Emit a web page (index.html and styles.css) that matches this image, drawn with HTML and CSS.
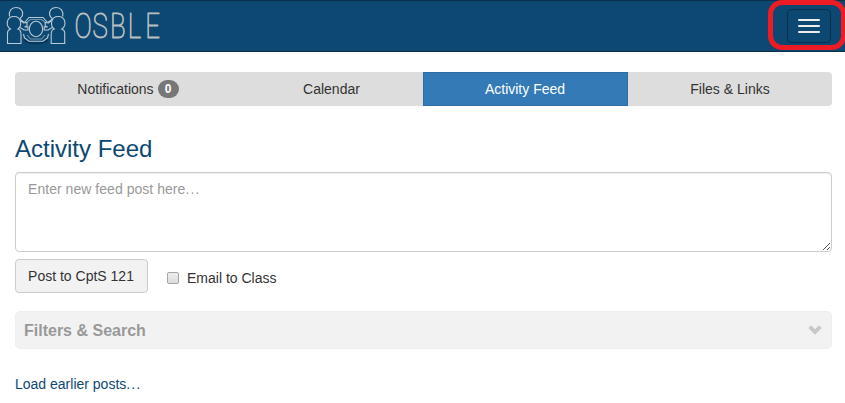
FILE: index.html
```html
<!DOCTYPE html>
<html lang="en">
<head>
<meta charset="utf-8">
<title>OSBLE - Activity Feed</title>
<link rel="stylesheet" href="styles.css">
</head>
<body>
<header class="navbar">
  <a class="brand">
    <svg class="brand-art" width="190" height="51" viewBox="0 0 190 51" fill="none">
      <g stroke="#063153" stroke-width="1.5">
        <path d="M24 39.500q3 4 12 4t12-4"/>
      </g>
      <g stroke="#b9c9d6" stroke-width="1.100">
        <path d="M24.500 22.500L29 17.500H43L47.500 22.500M23.500 34L24.500 38L29 41.300H43L47.500 38L48.500 34"/>
        <path stroke-opacity=".6" d="M27 22L30.500 19.500H41.500L45 22M27 35L30.500 39H41.500L45 35"/>
        <ellipse cx="36" cy="29" rx="6.700" ry="7.700"/>
        <g id="person">
          <path d="M9.500 16.500C8.500 11 11.500 7.500 16 7.500S23.500 10.500 22.500 15Q22 17 20 18.500L21.500 20.500L24.500 22.500"/>
          <path d="M10.500 29C5.500 26 6 16.500 14 16.500S22 26 18 29Q21 30 21 34V43.500H7.500V33Q7.500 30 10.500 29Z"/>
          <path d="M20.500 21Q22 21 23.500 23L27 22.500V26L24.500 27H28V30H24L20 27.500"/>
        </g>
        <use href="#person" transform="translate(72.200 0) scale(-1 1)"/>
      </g>
      <text class="wordmark" transform="scale(.74 1)" x="100.700 125 148.500 172.800 196.300" y="38">OSBLE</text>
    </svg>
  </a>
  <button class="toggle" aria-label="Menu"><span></span><span></span><span></span></button>
  <div class="highlight"></div>
</header>
<main class="container">
  <nav class="tabs">
    <a class="tab notifications">Notifications <span class="badge">0</span></a>
    <a class="tab">Calendar</a>
    <a class="tab active">Activity Feed</a>
    <a class="tab">Files &amp; Links</a>
  </nav>
  <h1>Activity Feed</h1>
  <div class="post-box">
    <span>Enter new feed post here<span class="dots">...</span></span>
    <svg class="grip" width="9" height="9" viewBox="0 0 9 9" stroke="#555" stroke-width="1"><path d="M1 8L8 1M5 8L8 5"/></svg>
  </div>
  <div class="actions">
    <button class="post">Post to CptS 121</button>
    <label class="email"><span class="check"></span>Email to Class</label>
  </div>
  <section class="filters">
    <h2>Filters &amp; Search</h2>
    <svg width="14" height="10" viewBox="0 0 14 10" fill="none" stroke="#c8c8c8" stroke-width="3.800"><path d="M1.700 1.700L7 7L12.300 1.700"/></svg>
  </section>
  <a class="more">Load earlier posts<span class="dots">...</span></a>
</main>
</body>
</html>
```
FILE: styles.css
```css
* { box-sizing: border-box; }
body {
  margin: 0;
  background: #fff;
  color: #333;
  font: 14px/20px "Liberation Sans", Arial, sans-serif;
}
.navbar {
  position: relative;
  display: flex;
  justify-content: space-between;
  height: 52px;
  padding-right: 14px;
  background: #0c4872;
  border: 1px solid #08304d;
  border-width: 1px 0;
}
.brand { height: 50px; }
.brand-art { display: block; margin-top: -1px; overflow: visible; }
.wordmark {
  font: 100 35px Roboto, sans-serif;
  fill: #b8bdc1;
  stroke: #b8bdc1;
  stroke-width: .9px;
}
.toggle {
  display: flex;
  flex-direction: column;
  gap: 4px;
  width: 44px;
  height: 34px;
  margin: 8px 0 0;
  padding: 9px 10px;
  background: transparent;
  border: 1px solid #08304d;
  border-radius: 4px;
}
.toggle span { width: 22px; height: 2px; border-radius: 1px; background: #eee; }
.highlight {
  position: absolute;
  top: -1px;
  right: -1px;
  width: 78px;
  height: 50px;
  border: 5px solid #ed1c24;
  border-radius: 14px;
}
.container { padding: 20px 13px 0 15px; }
.tabs {
  display: grid;
  grid-template-columns: 226px 182px 205px 204px;
  height: 34px;
  border-radius: 4px;
  background: #ddd;
}
.tab { display: flex; align-items: center; justify-content: center; gap: 4px; }
.tab:nth-child(2), .active { padding-right: 1px; }
.active { background: #337ab7; border: 1px solid #2e6da4; color: #fff; }
.badge {
  min-width: 21px;
  padding: 3px 7px;
  border-radius: 10px;
  background: #777;
  color: #fff;
  font-size: 12px;
  font-weight: bold;
  line-height: 12px;
  text-align: center;
}
h1 { margin: 30px 0 10px; color: #0c4872; font-size: 24px; font-weight: 400; line-height: 26px; }
.post-box {
  position: relative;
  height: 80px;
  padding: 6px 12px;
  border: 1px solid #ccc;
  border-radius: 4px;
  box-shadow: inset 0 1px 1px rgba(0, 0, 0, .075);
  color: #999;
}
.post-box > span { letter-spacing: .04px; }
.post-box .dots, .dots { letter-spacing: 1.1px; }
.grip { position: absolute; right: 0; bottom: 0; }
.actions { display: flex; gap: 19px; margin-top: 7px; }
.post {
  width: 133px;
  height: 34px;
  padding: 0 1px 0 0;
  background: #f2f2f2;
  border: 1px solid #ccc;
  border-radius: 4px;
  color: #333;
  font: inherit;
}
.email { display: flex; align-items: center; gap: 8px; padding-top: 4px; }
.check {
  width: 12px;
  height: 12px;
  border: 1px solid #a6a6a6;
  border-radius: 2px;
  background: linear-gradient(#eee, #dcdcdc);
}
.filters {
  display: flex;
  align-items: center;
  justify-content: space-between;
  height: 38px;
  margin-top: 18px;
  padding: 0 9px 0 8px;
  background: #f2f2f2;
  border: 1px solid #eee;
  border-radius: 5px;
}
h2 { margin: 2px 0 0; color: #999; font-size: 16px; line-height: 20px; }
.more { display: block; margin-top: 25px; color: #0c4872; }
```
